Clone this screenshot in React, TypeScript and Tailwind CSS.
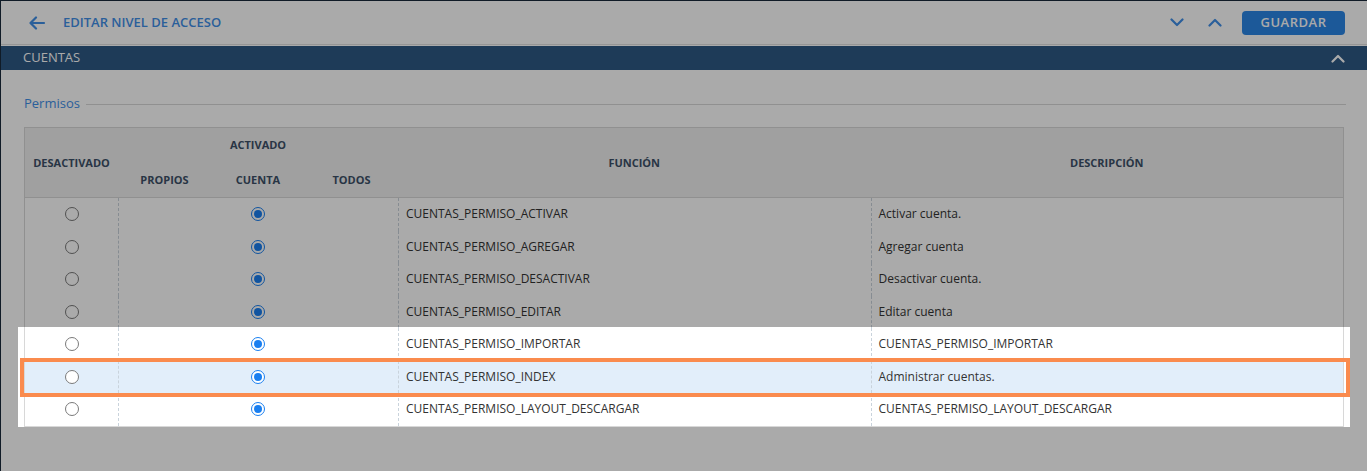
import React from 'react';

type Row = { fn: string; desc: string; highlight?: boolean };

const rows: Row[] = [
  { fn: 'CUENTAS_PERMISO_ACTIVAR', desc: 'Activar cuenta.' },
  { fn: 'CUENTAS_PERMISO_AGREGAR', desc: 'Agregar cuenta' },
  { fn: 'CUENTAS_PERMISO_DESACTIVAR', desc: 'Desactivar cuenta.' },
  { fn: 'CUENTAS_PERMISO_EDITAR', desc: 'Editar cuenta' },
  { fn: 'CUENTAS_PERMISO_IMPORTAR', desc: 'CUENTAS_PERMISO_IMPORTAR' },
  { fn: 'CUENTAS_PERMISO_INDEX', desc: 'Administrar cuentas.', highlight: true },
  { fn: 'CUENTAS_PERMISO_LAYOUT_DESCARGAR', desc: 'CUENTAS_PERMISO_LAYOUT_DESCARGAR' },
];

const cols = 'grid grid-cols-[93px_93px_94px_93px_1fr_1fr]';

const Radio = ({ checked }: { checked?: boolean }) =>
  checked ? (
    <span className="flex size-[14px] items-center justify-center rounded-full border-[1.5px] border-[#1a7ff0] bg-white">
      <span className="size-[8px] rounded-full bg-[#1a7ff0]" />
    </span>
  ) : (
    <span className="size-[14px] rounded-full border border-[#7a7a7a] bg-white" />
  );

const Chevron = ({ up, className }: { up?: boolean; className?: string }) => (
  <svg width="14" height="9" viewBox="0 0 14 9" fill="none" className={className}>
    <polyline
      points={up ? '1.5,7.5 7,2 12.5,7.5' : '1.5,1.5 7,7 12.5,1.5'}
      stroke="currentColor"
      strokeWidth="2.2"
      strokeLinecap="round"
      strokeLinejoin="round"
    />
  </svg>
);

const TableRow = ({ row }: { row: Row }) => (
  <div className={`${cols} relative h-[32.5px] items-center text-[12px] text-[#333] ${row.highlight ? 'bg-[#e2eefa]' : 'bg-white'}`}>
    <div className="flex h-full items-center justify-center">
      <Radio />
    </div>
    <div className="h-full border-l border-dashed border-[#c9d3dc]" />
    <div className="flex h-full items-center justify-center">
      <Radio checked />
    </div>
    <div className="h-full" />
    <div className="flex h-full items-center border-l border-dashed border-[#c9d3dc] pl-[7px]">{row.fn}</div>
    <div className="flex h-full items-center border-l border-dashed border-[#c9d3dc] pl-[7px]">{row.desc}</div>
    {row.highlight && (
      <div className="pointer-events-none absolute -top-[3px] -right-[7px] -bottom-[4px] -left-[5px] z-20 border-4 border-[#fa8b4e]" />
    )}
  </div>
);

const App = () => {
  return (
    <div className="min-h-screen w-full border-t border-l border-[#18293b] bg-white font-['Open_Sans',sans-serif]">
      {/* Header */}
      <div className="flex h-[44px] items-center border-b border-[#e0e0e0] pr-[22px] pl-[27px]">
        <svg width="18" height="14" viewBox="0 0 18 14" fill="none" className="text-[#3f8fe8]">
          <path d="M16 7H2.5M8 1.5 2.5 7 8 12.5" stroke="currentColor" strokeWidth="2.2" strokeLinecap="round" strokeLinejoin="round" />
        </svg>
        <h1 className="ml-[17px] text-[13px] font-semibold text-[#3f8fe8]">EDITAR NIVEL DE ACCESO</h1>
        <div className="ml-auto flex items-center">
          <Chevron className="text-[#3f8fe8]" />
          <Chevron up className="ml-[24px] text-[#3f8fe8]" />
          <button
            type="button"
            className="ml-[20px] h-[24px] w-[103px] rounded-[4px] bg-[#2b86e6] text-[13px] font-semibold tracking-[0.5px] text-white"
          >
            GUARDAR
          </button>
        </div>
      </div>

      {/* Section bar */}
      <div className="mt-px flex h-[24px] items-center bg-[#2e5985] pr-[22px] pl-[22px] text-[13px] text-white">
        <span>CUENTAS</span>
        <Chevron up className="ml-auto text-white" />
      </div>

      {/* Content */}
      <div className="pt-[25px] pr-[23px] pl-[23px]">
        <div className="mr-[-2px] flex h-[18px] items-center">
          <span className="text-[13px] text-[#3f8fe8]">Permisos</span>
          <span className="ml-[6px] h-px flex-1 bg-[#d8d8d8]" />
        </div>

        <div className="mt-[14px] border border-[#d8d8d8]">
          {/* Table header */}
          <div className={`${cols} h-[70px] grid-rows-[35px_35px] border-b border-[#d8d8d8] bg-[#f0f0f0] text-[11px] font-bold text-[#3d5068]`}>
            <div className="row-span-2 flex items-center justify-center">DESACTIVADO</div>
            <div className="col-span-3 flex items-center justify-center">ACTIVADO</div>
            <div className="row-span-2 flex items-center justify-center">FUNCIÓN</div>
            <div className="row-span-2 flex items-center justify-center">DESCRIPCIÓN</div>
            <div className="flex items-center justify-center">PROPIOS</div>
            <div className="flex items-center justify-center">CUENTA</div>
            <div className="flex items-center justify-center">TODOS</div>
          </div>

          {rows.slice(0, 4).map((row) => (
            <TableRow key={row.fn} row={row} />
          ))}

          {/* Spotlight rows */}
          <div className="relative">
            <div className="pointer-events-none absolute -top-px -right-[7px] -bottom-px -left-[7px] z-10 shadow-[0_0_0_9999px_rgba(0,0,0,0.333)]" />
            {rows.slice(4).map((row) => (
              <TableRow key={row.fn} row={row} />
            ))}
          </div>
        </div>
      </div>
    </div>
  );
};

export default App;
